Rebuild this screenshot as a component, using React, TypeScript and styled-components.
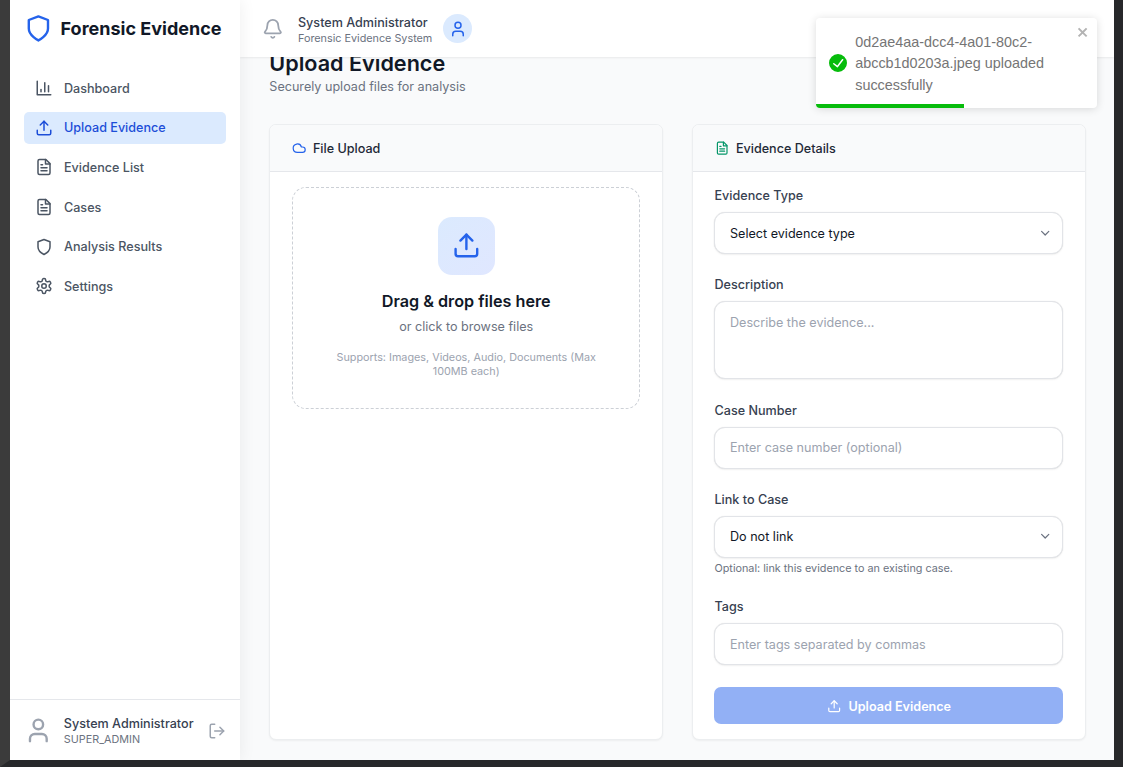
import React from 'react';
import styled, { createGlobalStyle, css } from 'styled-components';
import { Cloud, User, LogOut, ChevronDown, Bell } from 'lucide-react';

const GlobalStyle = createGlobalStyle`
  * { box-sizing: border-box; }
  body { margin: 0; background: #27282a; font-family: Inter, sans-serif; color: #111827; }
  p, h1, h2, h3 { margin: 0; }
  button, input, textarea { font-family: inherit; }
`;

type IconProps = { size?: number; color?: string; strokeWidth?: number };

const Glyph = ({ size = 18, color = 'currentColor', strokeWidth = 2, children }: IconProps & { children: React.ReactNode }) => (
  <svg width={size} height={size} viewBox="0 0 24 24" fill="none" stroke={color} strokeWidth={strokeWidth} strokeLinecap="round" strokeLinejoin="round">
    {children}
  </svg>
);

const ChartIcon = (p: IconProps) => (
  <Glyph {...p}><path d="M3 3v18h18" /><path d="M18 17V9" /><path d="M13 17V5" /><path d="M8 17v-3" /></Glyph>
);
const UploadIcon = (p: IconProps) => (
  <Glyph {...p}><path d="M21 15v4a2 2 0 0 1-2 2H5a2 2 0 0 1-2-2v-4" /><path d="M17 8l-5-5-5 5" /><path d="M12 3v12" /></Glyph>
);
const ShieldIcon = (p: IconProps) => (
  <Glyph {...p}><path d="M12 22s8-4 8-10V5l-8-3-8 3v7c0 6 8 10 8 10" /></Glyph>
);
const FileIcon = (p: IconProps) => (
  <Glyph {...p}>
    <path d="M14.5 2H6a2 2 0 0 0-2 2v16a2 2 0 0 0 2 2h12a2 2 0 0 0 2-2V7.5L14.5 2z" />
    <path d="M14 2v6h6" /><path d="M16 13H8" /><path d="M16 17H8" /><path d="M10 9H8" />
  </Glyph>
);
const SettingsIcon = (p: IconProps) => (
  <Glyph {...p}>
    <path d="M12.22 2h-.44a2 2 0 0 0-2 2v.18a2 2 0 0 1-1 1.73l-.43.25a2 2 0 0 1-2 0l-.15-.08a2 2 0 0 0-2.73.73l-.22.38a2 2 0 0 0 .73 2.73l.15.1a2 2 0 0 1 1 1.72v.51a2 2 0 0 1-1 1.74l-.15.09a2 2 0 0 0-.73 2.73l.22.38a2 2 0 0 0 2.73.73l.15-.08a2 2 0 0 1 2 0l.43.25a2 2 0 0 1 1 1.73V20a2 2 0 0 0 2 2h.44a2 2 0 0 0 2-2v-.18a2 2 0 0 1 1-1.73l.43-.25a2 2 0 0 1 2 0l.15.08a2 2 0 0 0 2.73-.73l.22-.39a2 2 0 0 0-.73-2.73l-.15-.08a2 2 0 0 1-1-1.74v-.5a2 2 0 0 1 1-1.74l.15-.09a2 2 0 0 0 .73-2.73l-.22-.38a2 2 0 0 0-2.73-.73l-.15.08a2 2 0 0 1-2 0l-.43-.25a2 2 0 0 1-1-1.73V4a2 2 0 0 0-2-2z" />
    <circle cx="12" cy="12" r="3" />
  </Glyph>
);

const Frame = styled.div`
  display: flex;
  width: 1123px;
  height: 767px;
  border-left: 10px solid #3b3b3b;
  border-right: 9px solid #27282a;
  border-bottom: 7px solid #27282a;
  background: #f9fafb;
  overflow: hidden;
`;

const Sidebar = styled.aside`
  display: flex;
  flex-direction: column;
  width: 230px;
  flex-shrink: 0;
  background: #fff;
  box-shadow: 0 0 16px rgba(0, 0, 0, 0.07);
  z-index: 2;
`;

const Brand = styled.div`
  display: flex;
  align-items: center;
  gap: 7.4px;
  height: 57px;
  padding-left: 14.4px;
  font-size: 18px;
  font-weight: 700;
  white-space: nowrap;
`;

const Nav = styled.nav`
  display: flex;
  flex-direction: column;
  gap: 7.2px;
  padding: 15.1px 14px 0 14.4px;
  flex: 1;
`;

const NavItem = styled.a<{ $active?: boolean }>`
  display: flex;
  align-items: center;
  gap: 10.8px;
  height: 32.4px;
  padding-left: 10.8px;
  border-radius: 5px;
  font-size: 12.6px;
  font-weight: 500;
  color: ${p => (p.$active ? '#1d4ed8' : '#4b5563')};
  background: ${p => (p.$active ? '#dbeafe' : 'transparent')};
`;

const Account = styled.footer`
  display: flex;
  align-items: center;
  height: 61px;
  padding: 1px 14px 0 14.4px;
  border-top: 1px solid #e5e7eb;
`;

const AccountText = styled.div`
  width: 145px;
  margin: 1px 0 0 10.8px;
`;

const PersonName = styled.p`
  font-size: 12.6px;
  line-height: 16px;
  font-weight: 500;
  color: #374151;
  white-space: nowrap;
`;

const PersonRole = styled.p`
  font-size: 10.8px;
  line-height: 15px;
  color: #6b7280;
  white-space: nowrap;
`;

const Main = styled.main`
  display: flex;
  flex-direction: column;
  flex: 1;
  min-width: 0;
`;

const Topbar = styled.header`
  display: flex;
  align-items: center;
  height: 57px;
  flex-shrink: 0;
  padding-left: 22px;
  background: #fff;
  box-shadow: 0 1px 2px rgba(0, 0, 0, 0.07);
  z-index: 1;
`;

const TopbarText = styled.div`
  margin: 4px 11px 0 14.4px;
`;

const Avatar = styled.div`
  display: grid;
  place-items: center;
  width: 29px;
  height: 29px;
  border-radius: 50%;
  background: #dbeafe;
`;

const Scroll = styled.div`
  flex: 1;
  min-height: 0;
  padding: 0 28px 0 29px;
  overflow: hidden;
`;

const PageHead = styled.div`
  margin: -10.5px 0 0 0.3px;
  height: 77.5px;
`;

const PageTitle = styled.h1`
  font-size: 21.6px;
  line-height: 32px;
  font-weight: 600;
`;

const PageSub = styled.p`
  font-size: 12.6px;
  line-height: 16px;
  color: #6b7280;
`;

const Columns = styled.div`
  display: grid;
  grid-template-columns: 394px 394px;
  gap: 29px;
  height: 616px;
`;

const Card = styled.section`
  display: flex;
  flex-direction: column;
  border: 1px solid #eceef0;
  border-radius: 7px;
  background: #fff;
  box-shadow: 0 1px 2px rgba(0, 0, 0, 0.05);
  overflow: hidden;
`;

const CardHead = styled.header`
  display: flex;
  align-items: center;
  gap: 7px;
  height: 47px;
  flex-shrink: 0;
  padding: 1px 0 0 21.5px;
  background: #f9fafb;
  border-bottom: 1px solid #e5e7eb;
  font-size: 12.6px;
  font-weight: 500;
  color: #1f2937;
`;

const CardBody = styled.div`
  padding: 15px 21.6px 0 22px;
`;

const DropZone = styled.div`
  display: flex;
  flex-direction: column;
  align-items: center;
  height: 222px;
  padding: 29px 28.4px 0;
  border: 1px dashed #ccd0d6;
  border-radius: 14px;
  text-align: center;
`;

const DropIcon = styled.div`
  display: grid;
  place-items: center;
  width: 57.6px;
  height: 57.5px;
  margin-left: 0.6px;
  border-radius: 14px;
  background: linear-gradient(135deg, #dbeafe, #e0e7ff);
`;

const DropTitle = styled.h3`
  margin-top: 14px;
  font-size: 16.2px;
  line-height: 25px;
  font-weight: 600;
`;

const DropHint = styled.p`
  margin-top: 4px;
  font-size: 12.6px;
  line-height: 18px;
  color: #6b7280;
`;

const DropSupport = styled.p`
  margin-top: 15px;
  font-size: 10.8px;
  line-height: 14.4px;
  color: #9ca3af;
`;

const FormBody = styled.div`
  padding: 15px 21.6px 0 21px;
`;

const Field = styled.div<{ $gap?: number }>`
  display: flex;
  flex-direction: column;
  margin-bottom: ${p => p.$gap ?? 22}px;
`;

const Label = styled.label`
  margin-bottom: 7px;
  padding-left: 0.5px;
  font-size: 12.6px;
  line-height: 18px;
  font-weight: 500;
  color: #374151;
`;

const control = css`
  width: 100%;
  border: 1px solid #e2e4e8;
  border-radius: 11px;
  background: #fff;
  box-shadow: 0 0 1px rgba(0, 0, 0, 0.12), 0 1px 2px rgba(0, 0, 0, 0.05);
  font-size: 12.6px;
  color: #111827;
`;

const SelectBox = styled.div`
  ${control}
  display: flex;
  align-items: center;
  justify-content: space-between;
  height: 42px;
  padding: 0 10px 0 15px;
`;

const SelectValue = styled.span<{ $drop?: number }>`
  line-height: 16px;
  padding-top: ${p => p.$drop ?? 1}px;
`;

const Input = styled.input<{ $drop?: number }>`
  ${control}
  height: 42px;
  padding: ${p => p.$drop ?? 0}px 15px 0;
  &::placeholder { color: #9ca3af; }
`;

const TextArea = styled.textarea`
  ${control}
  display: block;
  height: 78px;
  padding: 12px 15px;
  line-height: 18px;
  resize: none;
  &::placeholder { color: #9ca3af; }
`;

const HelpText = styled.p`
  margin-top: 4px;
  padding-left: 0.5px;
  font-size: 10.8px;
  line-height: 14px;
  color: #6b7280;
`;

const SubmitButton = styled.button`
  display: flex;
  align-items: center;
  justify-content: center;
  gap: 7.2px;
  width: 100%;
  height: 37px;
  padding: 2px 0 0 0.6px;
  border: 0;
  border-radius: 7px;
  background: #92b0f5;
  color: #fff;
  font-size: 12.6px;
  font-weight: 600;
`;

const Toast = styled.div`
  position: absolute;
  left: 816px;
  top: 18px;
  z-index: 10;
  display: flex;
  align-items: center;
  width: 280.5px;
  height: 90px;
  padding: 0 12.6px;
  border-radius: 4px;
  background: #fff;
  box-shadow: 0 1px 9px rgba(0, 0, 0, 0.14);
  overflow: hidden;
`;

const ToastText = styled.p`
  width: 205px;
  margin: 2px 0 0 8.6px;
  font-family: "Liberation Sans", Arial, sans-serif;
  font-size: 14.4px;
  line-height: 21.6px;
  color: #757575;
`;

const ToastClose = styled.svg`
  position: absolute;
  right: 7px;
  top: 7px;
`;

const ToastProgress = styled.div`
  position: absolute;
  left: 0;
  bottom: 0;
  width: 148px;
  height: 4px;
  background: #07bc0c;
`;

const navItems = [
  { label: 'Dashboard', icon: <ChartIcon /> },
  { label: 'Upload Evidence', icon: <UploadIcon />, active: true },
  { label: 'Evidence List', icon: <FileIcon /> },
  { label: 'Cases', icon: <FileIcon /> },
  { label: 'Analysis Results', icon: <ShieldIcon /> },
  { label: 'Settings', icon: <SettingsIcon /> },
];

export default function App() {
  return (
    <>
      <GlobalStyle />
      <Frame>
        <Sidebar>
          <Brand><ShieldIcon size={28.8} color="#2563eb" />Forensic Evidence</Brand>
          <Nav>
            {navItems.map(item => (
              <NavItem key={item.label} $active={item.active}>{item.icon}{item.label}</NavItem>
            ))}
          </Nav>
          <Account>
            <User size={28.8} color="#9ca3af" />
            <AccountText>
              <PersonName>System Administrator</PersonName>
              <PersonRole>SUPER_ADMIN</PersonRole>
            </AccountText>
            <LogOut size={18} color="#9ca3af" />
          </Account>
        </Sidebar>
        <Main>
          <Topbar>
            <Bell size={21.6} color="#9ca3af" />
            <TopbarText>
              <PersonName>System Administrator</PersonName>
              <PersonRole>Forensic Evidence System</PersonRole>
            </TopbarText>
            <Avatar><User size={18} color="#2563eb" /></Avatar>
          </Topbar>
          <Scroll>
            <PageHead>
              <PageTitle>Upload Evidence</PageTitle>
              <PageSub>Securely upload files for analysis</PageSub>
            </PageHead>
            <Columns>
              <Card>
                <CardHead><Cloud size={14.4} color="#2563eb" />File Upload</CardHead>
                <CardBody>
                  <DropZone>
                    <DropIcon><UploadIcon size={28.8} color="#2563eb" /></DropIcon>
                    <DropTitle>Drag &amp; drop files here</DropTitle>
                    <DropHint>or click to browse files</DropHint>
                    <DropSupport>Supports: Images, Videos, Audio, Documents (Max 100MB each)</DropSupport>
                  </DropZone>
                </CardBody>
              </Card>
              <Card>
                <CardHead><FileIcon size={14.4} color="#059669" />Evidence Details</CardHead>
                <FormBody>
                  <Field>
                    <Label>Evidence Type</Label>
                    <SelectBox><SelectValue>Select evidence type</SelectValue><ChevronDown size={14.4} color="#6b7280" /></SelectBox>
                  </Field>
                  <Field $gap={22.6}>
                    <Label>Description</Label>
                    <TextArea placeholder="Describe the evidence..." />
                  </Field>
                  <Field>
                    <Label>Case Number</Label>
                    <Input placeholder="Enter case number (optional)" />
                  </Field>
                  <Field $gap={22.4}>
                    <Label>Link to Case</Label>
                    <SelectBox><SelectValue $drop={0}>Do not link</SelectValue><ChevronDown size={14.4} color="#6b7280" /></SelectBox>
                    <HelpText>Optional: link this evidence to an existing case.</HelpText>
                  </Field>
                  <Field>
                    <Label>Tags</Label>
                    <Input $drop={1} placeholder="Enter tags separated by commas" />
                  </Field>
                  <SubmitButton><UploadIcon size={14.4} />Upload Evidence</SubmitButton>
                </FormBody>
              </Card>
            </Columns>
          </Scroll>
        </Main>
      </Frame>
      <Toast>
        <svg width="18" height="18" viewBox="0 0 24 24" fill="#07bc0c">
          <path d="M12 0a12 12 0 1012 12A12.014 12.014 0 0012 0zm6.927 8.2l-6.845 9.289a1.011 1.011 0 01-1.43.188l-4.888-3.908a1 1 0 111.25-1.562l4.076 3.261 6.227-8.451a1 1 0 111.61 1.183z" />
        </svg>
        <ToastText>0d2ae4aa-dcc4-4a01-80c2-abccb1d0203a.jpeg uploaded successfully</ToastText>
        <ToastClose width="12.6" height="14.4" viewBox="0 0 14 16" fill="#b3b3b3">
          <path fillRule="evenodd" d="M7.71 8.23l3.75 3.75-1.48 1.48-3.75-3.75-3.75 3.75L1 11.98l3.75-3.75L1 4.48 2.48 3l3.75 3.75L9.98 3l1.48 1.48-3.75 3.75z" />
        </ToastClose>
        <ToastProgress />
      </Toast>
    </>
  );
}
